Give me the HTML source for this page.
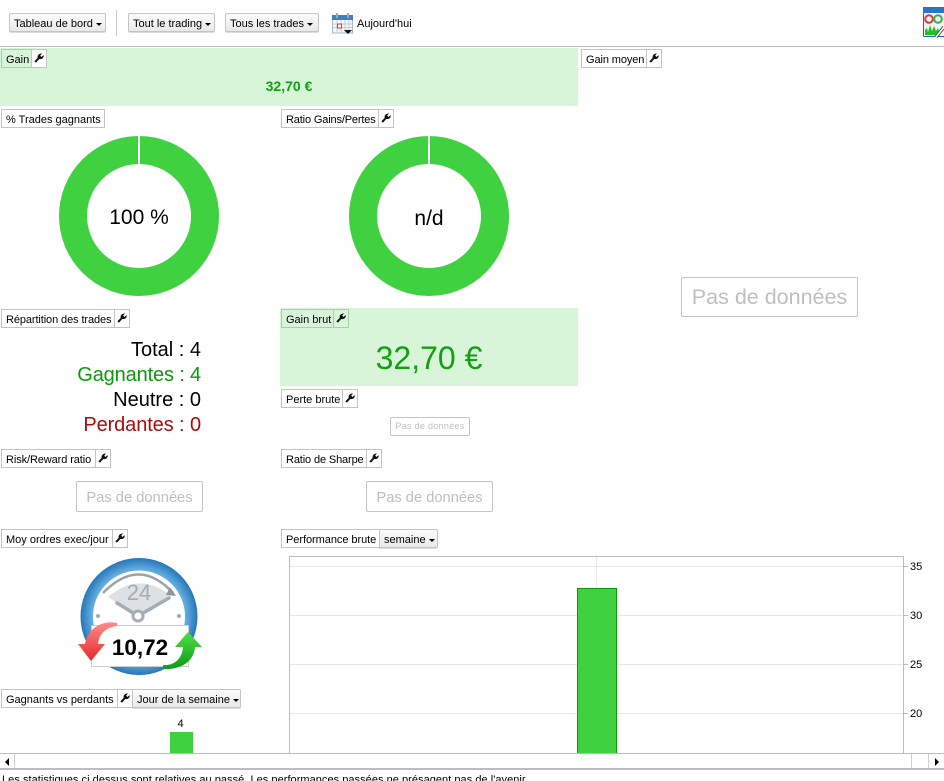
<!DOCTYPE html>
<html><head><meta charset="utf-8"><style>
html,body{margin:0;padding:0;background:#fff;width:944px;height:781px;overflow:hidden}
body{position:relative;font-family:"Liberation Sans",Arial,sans-serif;font-size:11px;color:#000}
.a{position:absolute;white-space:nowrap}
.btn{position:absolute;box-sizing:border-box;height:19px;border:1px solid #c4c4c4;border-radius:2px;background:linear-gradient(#fbfbfb,#e9e9e9);line-height:21px;white-space:nowrap;text-align:left;padding-left:4px;box-shadow:0 1px 0 #ddd}
.car{display:inline-block;border-left:3px solid transparent;border-right:3px solid transparent;border-top:3.5px solid #000;vertical-align:1px;margin-left:3px}
.lab{position:absolute;box-sizing:border-box;height:19px;border:1px solid #c4c4c4;background:#fff;line-height:21px;white-space:nowrap;padding-left:4px}
.wr{position:absolute;top:-1px;box-sizing:border-box;width:16px;height:19px;border:1px solid #c4c4c4;background:#fff}
.wr svg{position:absolute;left:2px;top:3px}
.g{background:#d9f5d9;border-color:#a8cfa8}
.nod{position:absolute;box-sizing:border-box;border:1px solid #c4c4c4;border-radius:2px;color:#bfbfbf;text-align:center;background:#fff}
.r{position:absolute;text-align:right;font-size:20px;white-space:nowrap;right:743px;line-height:25px}
.grid{position:absolute;background:#e8e8e8}
</style></head><body>
<svg width="0" height="0" style="position:absolute"><defs><symbol id="w" viewBox="0 0 9.500 9.500"><path d="M0.300 8 L3.500 4.600 C3 2.800 4.200 0.300 7.600 0.300 L5.900 2.400 L7 3.800 L9.200 2 C9.600 4.600 7.500 6.300 5 5.700 L1.900 9.200 Z" fill="#111"/></symbol></defs></svg>

<div class="btn" style="left:9px;top:13px;width:97px">Tableau de bord<span class="car"></span></div>
<div style="position:absolute;left:116px;top:10px;width:1px;height:26px;background:#ccc"></div>
<div class="btn" style="left:128px;top:13px;width:87px">Tout le trading<span class="car"></span></div>
<div class="btn" style="left:225px;top:13px;width:94px">Tous les trades<span class="car"></span></div>
<svg class="a" style="left:332px;top:13px" width="22" height="21" viewBox="0 0 22 21">
<rect x="0.500" y="3" width="20" height="17" fill="#f4f7fa" stroke="#a9b8c6"/>
<rect x="0" y="2" width="21" height="5" fill="#3f7fbf"/>
<rect x="4" y="0" width="2" height="5" fill="#9ab"/><rect x="15" y="0" width="2" height="5" fill="#9ab"/>
<path d="M1 11H20M1 14.500H20M5 7V20M9 7V20M13 7V20M17 7V20" stroke="#c3ced8"/>
<rect x="5.500" y="11" width="4" height="4" fill="#fff" stroke="#e33"/>
<path d="M12 17H20L16 21Z" fill="#111"/></svg>
<div class="a" style="left:357px;top:17px;line-height:15px">Aujourd'hui</div>
<svg class="a" style="left:923px;top:7px" width="21" height="31" viewBox="0 0 21 31">
<rect x="0.500" y="0.500" width="24" height="29" rx="1" fill="#f2f5f2" stroke="#1d5fc0"/>
<rect x="0" y="0" width="21" height="6" fill="#2a74c9"/>
<circle cx="6" cy="12" r="3.800" fill="none" stroke="#dd3a3a" stroke-width="2"/>
<circle cx="15" cy="12" r="3.800" fill="none" stroke="#2fb34a" stroke-width="2"/>
<path d="M2 28V23L4 21L5 25L7 18L9 24L11 19L13 24L15 21L17 28Z" fill="#22c01e"/>
<path d="M13 30L21 20" stroke="#555" stroke-width="3.500"/><path d="M13 30L21 20" stroke="#fff" stroke-width="1.500"/></svg>
<div style="position:absolute;left:0;top:46px;width:944px;height:1px;background:#bdbdbd"></div>

<!-- Gain -->
<div style="position:absolute;left:0;top:48px;width:578px;height:58px;background:#d9f5d9"></div>
<div class="lab g" style="left:1px;top:49px;width:31px">Gain<div class="wr" style="left:29px;background:#fff"><svg width="10" height="10"><use href="#w"/></svg></div></div>
<div class="a" style="left:0;width:578px;top:78px;text-align:center;font-size:14px;font-weight:bold;color:#12a012;line-height:17px">32,70 €</div>

<div class="lab" style="left:581px;top:49px;width:66px;letter-spacing:-.1px">Gain moyen<div class="wr" style="left:64px"><svg width="10" height="10"><use href="#w"/></svg></div></div>
<div class="nod" style="left:681px;top:277px;width:177px;height:40px;font-size:21.500px;line-height:39px">Pas de données</div>

<div class="lab" style="left:1px;top:109px;width:104px">% Trades gagnants</div>
<div class="lab" style="left:281px;top:109px;width:98px;letter-spacing:-.15px">Ratio Gains/Pertes<div class="wr" style="left:96px"><svg width="10" height="10"><use href="#w"/></svg></div></div>

<!-- Donuts -->
<svg class="a" style="left:59px;top:136px" width="160" height="160"><circle cx="80" cy="80" r="66" fill="none" stroke="#3fd13f" stroke-width="28"/><rect x="79" y="0" width="2" height="28" fill="#fff"/></svg>
<div class="a" style="left:59px;width:160px;top:205px;text-align:center;font-size:21px;line-height:26px">100 %</div>
<svg class="a" style="left:349px;top:136px" width="160" height="160"><circle cx="80" cy="80" r="66" fill="none" stroke="#3fd13f" stroke-width="28"/><rect x="79" y="0" width="2" height="28" fill="#fff"/></svg>
<div class="a" style="left:349px;width:160px;top:206px;text-align:center;font-size:21px;line-height:26px">n/d</div>

<!-- Repartition -->
<div class="lab" style="left:1px;top:309px;width:114px;letter-spacing:-.1px">Répartition des trades<div class="wr" style="left:112px"><svg width="10" height="10"><use href="#w"/></svg></div></div>
<div class="r" style="top:338px">Total : 4</div>
<div class="r" style="top:363px;color:#0a9a0a;letter-spacing:-.15px">Gagnantes : 4</div>
<div class="r" style="top:388px">Neutre : 0</div>
<div class="r" style="top:413px;color:#a80c0c;letter-spacing:-.1px">Perdantes : 0</div>

<!-- Gain brut -->
<div style="position:absolute;left:280px;top:308px;width:298px;height:78px;background:#d9f5d9"></div>
<div class="lab g" style="left:281px;top:309px;width:53px;background:#d9f5d9">Gain brut<div class="wr g" style="left:51px"><svg width="10" height="10"><use href="#w"/></svg></div></div>
<div class="a" style="left:280px;width:298px;top:339px;text-align:center;font-size:32px;color:#12a012;line-height:38px">32,70 €</div>

<div class="lab" style="left:281px;top:389px;width:62px">Perte brute<div class="wr" style="left:60px"><svg width="10" height="10"><use href="#w"/></svg></div></div>
<div class="nod" style="left:390px;top:417px;width:80px;height:19px;font-size:9px;line-height:17px;letter-spacing:.3px">Pas de données</div>

<div class="lab" style="left:1px;top:449px;width:95px;letter-spacing:-.1px">Risk/Reward ratio<div class="wr" style="left:93px"><svg width="10" height="10"><use href="#w"/></svg></div></div>
<div class="nod" style="left:76px;top:481px;width:127px;height:31px;font-size:14.700px;line-height:32px">Pas de données</div>
<div class="lab" style="left:281px;top:449px;width:86px;letter-spacing:-.13px">Ratio de Sharpe<div class="wr" style="left:84px"><svg width="10" height="10"><use href="#w"/></svg></div></div>
<div class="nod" style="left:366px;top:481px;width:127px;height:31px;font-size:14.700px;line-height:32px">Pas de données</div>

<div class="lab" style="left:1px;top:529px;width:112px">Moy ordres exec/jour<div class="wr" style="left:110px"><svg width="10" height="10"><use href="#w"/></svg></div></div>
<div class="lab" style="left:281px;top:529px;width:99px;letter-spacing:-.05px">Performance brute</div>
<div class="btn" style="left:379px;top:529px;width:59px;padding-left:4px;border-radius:0 2px 2px 0">semaine<span class="car"></span></div>

<!-- Gauge -->
<svg class="a" style="left:76px;top:556px" width="130" height="120" viewBox="0 0 130 120">
<defs><radialGradient id="b" cx="0.500" cy="0.500" r="0.500"><stop offset="0.780" stop-color="#6ab4e4"/><stop offset="1" stop-color="#2676b8"/></radialGradient>
<linearGradient id="rd" x1="0" y1="0" x2="0" y2="1"><stop offset="0" stop-color="#ff8a8a"/><stop offset="1" stop-color="#e22a2a"/></linearGradient>
<linearGradient id="gr" x1="0" y1="0" x2="0" y2="1"><stop offset="0" stop-color="#4fe044"/><stop offset="1" stop-color="#0c9a1a"/></linearGradient></defs>
<circle cx="63" cy="60.500" r="58.500" fill="url(#b)"/><circle cx="63" cy="60.500" r="46" fill="#fff"/>
<path d="M32 41L62 60L94 39Q63 15 32 41Z" fill="#dde1e3"/>
<path d="M27 37Q63 0 97 37" fill="none" stroke="#9aa3aa" stroke-width="2.500"/><path d="M94 31L100 40L90 39Z" fill="#8f989f"/>
<text x="63" y="44" text-anchor="middle" font-family="Liberation Sans" font-size="22" fill="#a2acb2">24</text>
<path d="M41 47L62 60L93 42" fill="none" stroke="#a4adb3" stroke-width="3.500" stroke-linecap="round" stroke-linejoin="round"/>
<circle cx="62" cy="60" r="5" fill="#fff" stroke="#a4adb3" stroke-width="3"/>
<circle cx="22" cy="60" r="2" fill="#a4adb3"/><circle cx="103" cy="60" r="2" fill="#a4adb3"/>
<rect x="15.500" y="69.500" width="97" height="41" fill="#fff" stroke="#ccc"/>
<path d="M41 67C26 64 12 72 9 88H2L15 105L29 88H22C23 78 30 71 41 70Z" fill="url(#rd)"/>
<path d="M87 109C98 110 106 103 107 91H99L112 76L126 91H119C118 106 104 114 87 113Z" fill="url(#gr)"/>
<text x="64" y="99" text-anchor="middle" font-family="Liberation Sans" font-weight="bold" font-size="22.500" fill="#000">10,72</text>
</svg>

<div class="lab" style="left:1px;top:689px;width:117px">Gagnants vs perdants<div class="wr" style="left:115px"><svg width="10" height="10"><use href="#w"/></svg></div></div>
<div class="btn" style="left:132px;top:689px;width:109px;padding-left:4px;border-radius:0 2px 2px 0">Jour de la semaine<span class="car"></span></div>
<div class="a" style="left:169px;width:23px;top:718px;text-align:center;font-size:11px;line-height:13px">4</div>
<div style="position:absolute;left:170px;top:732px;width:23px;height:21px;background:#3fd13f"></div>

<!-- Chart -->
<div style="position:absolute;left:289px;top:556px;width:615px;height:197px;box-sizing:border-box;border:1px solid #bdbdbd;border-bottom:0;background:#fff"></div>
<div class="grid" style="left:290px;top:566px;width:613px;height:1px"></div>
<div class="grid" style="left:290px;top:615px;width:613px;height:1px"></div>
<div class="grid" style="left:290px;top:664px;width:613px;height:1px"></div>
<div class="grid" style="left:290px;top:713px;width:613px;height:1px"></div>
<div class="grid" style="left:596px;top:557px;width:1px;height:196px"></div>
<div style="position:absolute;left:577px;top:588px;width:40px;height:165px;box-sizing:border-box;border:1px solid #0c9a0c;border-bottom:0;background:#3fd13f"></div>
<div style="position:absolute;left:904px;top:566px;width:4px;height:1px;background:#bbb"></div>
<div style="position:absolute;left:904px;top:615px;width:4px;height:1px;background:#bbb"></div>
<div style="position:absolute;left:904px;top:664px;width:4px;height:1px;background:#bbb"></div>
<div style="position:absolute;left:904px;top:713px;width:4px;height:1px;background:#bbb"></div>
<div class="a" style="left:910px;top:560px;line-height:14px">35</div>
<div class="a" style="left:910px;top:609px;line-height:14px">30</div>
<div class="a" style="left:910px;top:658px;line-height:14px">25</div>
<div class="a" style="left:910px;top:707px;line-height:14px">20</div>

<!-- Scrollbar -->
<div style="position:absolute;left:0;top:753px;width:944px;background:#fff;border-top:1px solid #bdbdbd;border-bottom:2px solid #bdbdbd;box-sizing:border-box;height:17px"></div>
<div style="position:absolute;left:14px;top:754px;width:1px;height:14px;background:#d0d0d0"></div>
<div style="position:absolute;left:911px;top:754px;width:1px;height:14px;background:#d0d0d0"></div>
<div style="position:absolute;left:928px;top:754px;width:1px;height:14px;background:#d0d0d0"></div>
<div style="position:absolute;left:5px;top:758px;border-right:4px solid #000;border-top:4px solid transparent;border-bottom:4px solid transparent"></div>
<div style="position:absolute;left:935px;top:758px;border-left:4px solid #000;border-top:4px solid transparent;border-bottom:4px solid transparent"></div>

<div class="a" style="left:2px;top:773px;line-height:14px;letter-spacing:.04px">Les statistiques ci dessus sont relatives au passé. Les performances passées ne présagent pas de l'avenir.</div>
</body></html>
